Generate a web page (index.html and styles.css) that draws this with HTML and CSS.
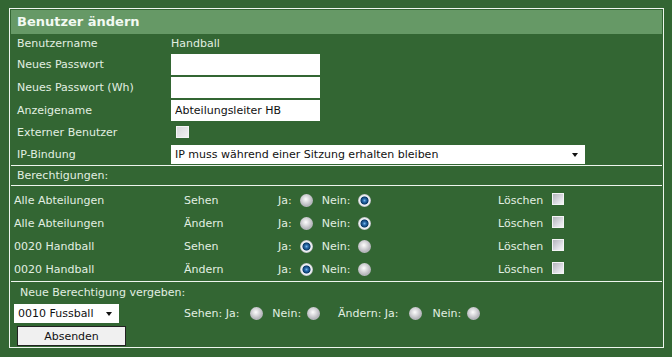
FILE: index.html
```html
<!DOCTYPE html>
<html lang="de">
<head>
    <meta charset="UTF-8">
    <title>Benutzer ändern</title>
    <link rel="stylesheet" href="styles.css">
</head>
<body>
    <form class="frame">
        <div class="title">Benutzer ändern</div>

        <div class="fields">
            <div class="row first"><span class="label">Benutzername</span><span>Handball</span></div>
            <div class="row"><span class="label">Neues Passwort</span><input type="password" class="text"></div>
            <div class="row"><span class="label">Neues Passwort (Wh)</span><input type="password" class="text"></div>
            <div class="row"><span class="label">Anzeigename</span><input type="text" class="text" value="Abteilungsleiter HB"></div>
            <div class="row check"><span class="label">Externer Benutzer</span><input type="checkbox" class="box ext"></div>
            <div class="row pick">
                <span class="label">IP-Bindung</span>
                <span class="sel wide">
                    <select>
                        <option>IP muss während einer Sitzung erhalten bleiben</option>
                    </select>
                </span>
            </div>
        </div>

        <div class="perm-head">Berechtigungen:</div>

        <div class="perms">
            <div class="perm">
                <span class="c-name">Alle Abteilungen</span>
                <span class="c-type">Sehen</span>
                <span class="c-yesno">Ja:<input type="radio" name="p1" class="radio yes">Nein:<input type="radio" name="p1" class="radio no" checked></span>
                <span>Löschen</span><input type="checkbox" class="box del">
            </div>
            <div class="perm">
                <span class="c-name">Alle Abteilungen</span>
                <span class="c-type">Ändern</span>
                <span class="c-yesno">Ja:<input type="radio" name="p2" class="radio yes">Nein:<input type="radio" name="p2" class="radio no" checked></span>
                <span>Löschen</span><input type="checkbox" class="box del">
            </div>
            <div class="perm">
                <span class="c-name">0020 Handball</span>
                <span class="c-type">Sehen</span>
                <span class="c-yesno">Ja:<input type="radio" name="p3" class="radio yes" checked>Nein:<input type="radio" name="p3" class="radio no"></span>
                <span>Löschen</span><input type="checkbox" class="box del">
            </div>
            <div class="perm">
                <span class="c-name">0020 Handball</span>
                <span class="c-type">Ändern</span>
                <span class="c-yesno">Ja:<input type="radio" name="p4" class="radio yes" checked>Nein:<input type="radio" name="p4" class="radio no"></span>
                <span>Löschen</span><input type="checkbox" class="box del">
            </div>
        </div>

        <div class="new">
            <div class="new-title">Neue Berechtigung vergeben:</div>
            <div class="new-row">
                <span class="c-name">
                    <span class="sel small">
                        <select>
                            <option>0010 Fussball</option>
                            <option>0020 Handball</option>
                        </select>
                    </span>
                </span>
                <span>Sehen: Ja:</span><input type="radio" name="ns" class="radio n1">
                <span>Nein:</span><input type="radio" name="ns" class="radio n2">
                <span>Ändern: Ja:</span><input type="radio" name="na" class="radio n3">
                <span>Nein:</span><input type="radio" name="na" class="radio n4">
            </div>
            <button type="submit" class="send">Absenden</button>
        </div>
    </form>
</body>
</html>
```

FILE: styles.css
```css
body{
    margin: 0;
    background: #336633;
    font-family: "DejaVu Sans", Verdana, sans-serif;
    font-size: 11px;
    color: #e2efe2;
}
.frame{
    box-sizing: border-box;
    width: 655px;
    height: 340px;
    margin: 8px 0 0 9px;
    padding: 1px;
    border: 1px solid #eef6ee;
}
.title{
    height: 24px;
    line-height: 24px;
    padding-left: 6px;
    background: #669966;
    color: #f2faf2;
    font-size: 13px;
    font-weight: bold;
}

/* user fields */
.fields{
    padding-left: 6px;
}
.row{
    display: flex;
    align-items: center;
    height: 23px;
}
.row.first{
    height: 19px;
}
.row.check{
    height: 21px;
}
.row.pick{
    height: 22px;
}
.label{
    flex: none;
    width: 154px;
}
.text{
    box-sizing: border-box;
    width: 149px;
    height: 21px;
    margin: 0;
    padding: 0 4px;
    border: none;
    background: #fff;
    color: #111;
    font: inherit;
}

/* selects */
.sel{
    position: relative;
    display: inline-block;
}
.sel select{
    appearance: none;
    box-sizing: border-box;
    display: block;
    height: 19px;
    margin: 0;
    padding: 0 0 0 4px;
    border: none;
    border-radius: 0;
    background: #fff;
    color: #111;
    font: inherit;
}
.sel::after{
    content: "";
    position: absolute;
    top: 8px;
    right: 7px;
    border-left: 3px solid transparent;
    border-right: 3px solid transparent;
    border-top: 4px solid #111;
    pointer-events: none;
}
.sel.wide select{
    width: 414px;
}
.sel.small select{
    width: 105px;
}

/* checkbox + radio */
.box{
    appearance: none;
    box-sizing: border-box;
    width: 12px;
    height: 12px;
    margin: 0;
    border: 1px solid #f4f4f6;
    background: linear-gradient(135deg, #b4b4bc, #e4e4ea 70%, #f4f4f4);
}
.box.ext{
    width: 13px;
    margin: 0 0 2px 5px;
    background: linear-gradient(135deg, #d8d8dc, #f2f2f2);
}
.box.del{
    margin: 0 0 4px 9px;
}
.radio{
    appearance: none;
    width: 13px;
    height: 13px;
    margin: 0;
    border-radius: 50%;
    background: radial-gradient(circle at 45% 40%, #fdfdfd 0, #e2e2e4 2.5px, #b6b6bc 6.5px);
}
.radio:checked{
    background: radial-gradient(circle, #7ab8e6 0, #2a6cae 1.6px, #0c3a68 3.6px, #dde6ee 4.4px, #f2f2f2 5px, #b4b8c0 6.5px);
}

/* permissions */
.perm-head{
    height: 20px;
    line-height: 19px;
    padding-left: 6px;
    border-top: 1px solid #eef6ee;
    box-sizing: border-box;
}
.perms{
    padding: 3px 0 0 3px;
    border-top: 1px solid #eef6ee;
}
.perm{
    display: flex;
    align-items: center;
    height: 23px;
}
.c-name{
    flex: none;
    width: 170px;
}
.c-type{
    flex: none;
    width: 94px;
}
.c-yesno{
    flex: none;
    display: flex;
    align-items: center;
    width: 220px;
}
.radio.yes{
    margin: 0 9px 0 8px;
}
.radio.no{
    margin-left: 8px;
}

/* new permission */
.new{
    padding-left: 3px;
    border-top: 1px solid #eef6ee;
}
.new-title{
    height: 22px;
    line-height: 22px;
    padding-left: 6px;
}
.new-row{
    display: flex;
    align-items: center;
    height: 19px;
}
.radio.n1{
    margin: 0 9px 0 11px;
}
.radio.n2{
    margin: 0 18px 0 6px;
}
.radio.n3{
    margin: 0 11px 0 10px;
}
.radio.n4{
    margin-left: 6px;
}
.send{
    display: block;
    box-sizing: border-box;
    width: 109px;
    height: 20px;
    margin: 3px 0 0 3px;
    padding: 0;
    border: 1px solid #222;
    border-radius: 0;
    background: #f0f0f0;
    color: #111;
    font: inherit;
}
```
